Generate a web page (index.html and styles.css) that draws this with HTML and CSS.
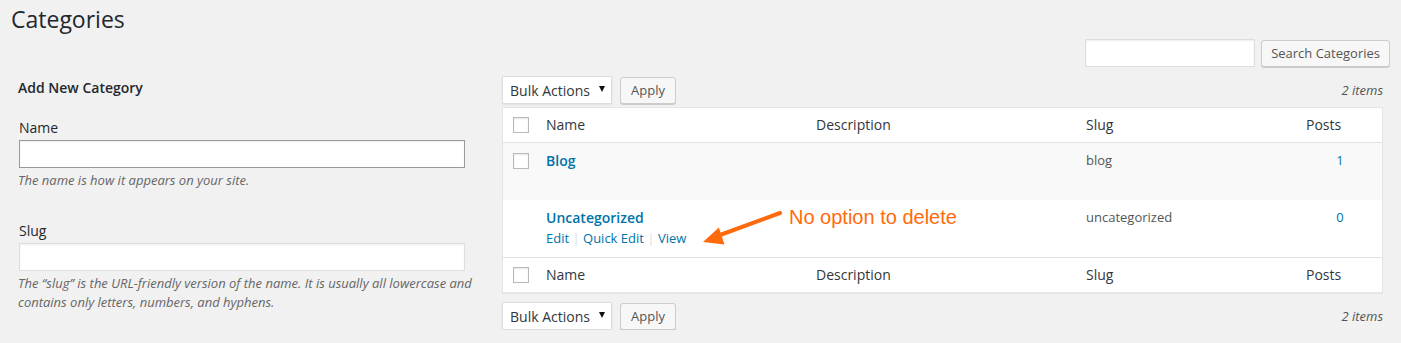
FILE: index.html
```html
<!DOCTYPE html>
<html lang="en">
<head>
  <meta charset="UTF-8">
  <title>Categories</title>
  <link rel="stylesheet" href="styles.css">
</head>
<body>

  <div class="wrap">
    <h1>Categories</h1>

    <form class="search-box">
      <input type="search" class="search-input">
      <button type="button" class="button">Search Categories</button>
    </form>

    <div class="columns">
      <div class="col-left">
        <h2>Add New Category</h2>

        <div class="form-field">
          <label for="tag-name">Name</label>
          <input type="text" id="tag-name" class="field-name">
          <p class="desc">The name is how it appears on your site.</p>
        </div>

        <div class="form-field slug-field">
          <label for="tag-slug">Slug</label>
          <input type="text" id="tag-slug">
          <p class="desc">The &ldquo;slug&rdquo; is the URL-friendly version of the name. It is usually all lowercase and contains only letters, numbers, and hyphens.</p>
        </div>
      </div>

      <div class="col-right">
        <div class="tablenav">
          <div class="bulk-select">
            <span>Bulk Actions</span>
            <span class="caret"></span>
          </div>
          <button type="button" class="button">Apply</button>
          <span class="count">2 items</span>
        </div>

        <table class="list-table">
          <thead>
            <tr>
              <th class="check-col"><span class="checkbox"></span></th>
              <th class="col-name">Name</th>
              <th class="col-desc">Description</th>
              <th class="col-slug">Slug</th>
              <th class="col-posts">Posts</th>
            </tr>
          </thead>
          <tbody>
            <tr class="alt">
              <td class="check-col"><span class="checkbox"></span></td>
              <td class="col-name">
                <a href="#" class="row-title">Blog</a>
                <div class="row-actions hidden">Edit</div>
              </td>
              <td class="col-desc"></td>
              <td class="col-slug">blog</td>
              <td class="col-posts"><a href="#">1</a></td>
            </tr>
            <tr>
              <td class="check-col"></td>
              <td class="col-name">
                <a href="#" class="row-title">Uncategorized</a>
                <div class="row-actions">
                  <a href="#">Edit</a> <span class="sep">|</span>
                  <a href="#">Quick Edit</a> <span class="sep">|</span>
                  <a href="#">View</a>
                </div>
              </td>
              <td class="col-desc"></td>
              <td class="col-slug">uncategorized</td>
              <td class="col-posts"><a href="#">0</a></td>
            </tr>
          </tbody>
          <tfoot>
            <tr>
              <th class="check-col"><span class="checkbox"></span></th>
              <th class="col-name">Name</th>
              <th class="col-desc">Description</th>
              <th class="col-slug">Slug</th>
              <th class="col-posts">Posts</th>
            </tr>
          </tfoot>
        </table>

        <div class="tablenav bottom">
          <div class="bulk-select">
            <span>Bulk Actions</span>
            <span class="caret"></span>
          </div>
          <button type="button" class="button">Apply</button>
          <span class="count">2 items</span>
        </div>

        <!-- annotation over the table -->
        <svg class="note-arrow" width="90" height="45" viewBox="0 0 90 45">
          <line x1="80" y1="8" x2="20" y2="30" stroke="#ff6a0c" stroke-width="4" stroke-linecap="round"/>
          <polygon points="3,37 18.9,22.5 24.5,39.5" fill="#ff6a0c"/>
        </svg>
        <span class="note-text">No option to delete</span>
      </div>
    </div>
  </div>

</body>
</html>
```

FILE: styles.css
```css
/* General */
body {
  margin: 0;
  background: #f1f1f1;
  color: #444;
  font-family: 'Open Sans', sans-serif;
  font-size: 13px;
}

.wrap {
  padding: 0 11px 0 11px;
}

h1 {
  margin: 0;
  padding-top: 5px;
  font-size: 23px;
  font-weight: 400;
  line-height: 29px;
  color: #23282d;
}

/* Buttons and inputs */
.button {
  height: 27px;
  padding: 0 10px 1px;
  font-family: 'Open Sans', sans-serif;
  font-size: 13px;
  line-height: 24px;
  color: #555;
  background: #f7f7f7;
  border: 1px solid #ccc;
  border-radius: 3px;
  box-shadow: 0 1px 0 #ccc;
  cursor: pointer;
}

input[type="text"],
input[type="search"] {
  box-sizing: border-box;
  height: 28px;
  margin: 0;
  padding: 3px 5px;
  font-family: 'Open Sans', sans-serif;
  font-size: 14px;
  background: #fff;
  border: 1px solid #ddd;
  box-shadow: inset 0 1px 2px rgba(0, 0, 0, 0.07);
  outline: none;
}

/* Search */
.search-box {
  display: flex;
  justify-content: flex-end;
  align-items: flex-start;
  gap: 6px;
  margin-top: 5px;
}

.search-input {
  width: 170px;
}

.search-box .button {
  height: 27px;
  margin-top: 1px;
  padding: 0 9px 1px;
}

/* Columns */
.columns {
  display: flex;
  gap: 37px;
  padding: 0 7px 0 8px;
}

.col-left {
  width: 446px;
  flex-shrink: 0;
}

.col-left h2 {
  margin: 11px 0 0 -1px;
  font-size: 14px;
  font-weight: 600;
  line-height: 20px;
  color: #23282d;
}

.form-field {
  margin-top: 20px;
}

.form-field label {
  display: block;
  margin-bottom: 2px;
  font-size: 14px;
  line-height: 20px;
  color: #23282d;
}

.form-field input {
  display: block;
  width: 100%;
}

.form-field .field-name {
  border-color: #999;
}

.desc {
  margin: 3px -14px 0 -1px;
  font-size: 13px;
  font-style: italic;
  line-height: 19px;
  color: #666;
}

.slug-field {
  margin-top: 31px;
}

/* Right column */
.col-right {
  position: relative;
  flex: 1;
  padding-top: 9px;
}

.tablenav {
  display: flex;
  align-items: center;
  gap: 8px;
  height: 28px;
  margin-bottom: 3px;
}

.tablenav.bottom {
  margin-top: 9px;
  margin-bottom: 0;
}

.bulk-select {
  box-sizing: border-box;
  display: flex;
  justify-content: space-between;
  align-items: center;
  width: 110px;
  height: 28px;
  padding: 0 6px 0 7px;
  font-size: 14px;
  color: #32373c;
  background: #fff;
  border: 1px solid #ddd;
  box-shadow: 0 1px 2px rgba(0, 0, 0, 0.07);
}

.caret {
  width: 0;
  height: 0;
  border-left: 3.5px solid transparent;
  border-right: 3.5px solid transparent;
  border-top: 6px solid #111;
  margin-top: -2px;
}

.tablenav .button {
  height: 27px;
}

.count {
  margin-left: auto;
  font-style: italic;
  color: #555;
}

/* Table */
.list-table {
  width: 100%;
  table-layout: fixed;
  border-collapse: collapse;
  border: 1px solid #e5e5e5;
  background: #fff;
  box-shadow: 0 1px 1px rgba(0, 0, 0, 0.04);
}

.list-table th,
.list-table td {
  padding: 7px 10px;
  text-align: left;
  vertical-align: top;
  font-weight: 400;
  line-height: 20px;
}

.list-table th {
  font-size: 14px;
  color: #32373c;
}

.list-table thead th {
  border-bottom: 1px solid #e1e1e1;
}

.list-table tfoot th {
  border-top: 1px solid #e1e1e1;
}

.list-table td {
  height: 40px;
  padding-top: 8px;
  padding-bottom: 9px;
  font-size: 13px;
  line-height: 19px;
  color: #555;
}

.list-table tr.alt td {
  background: #f9f9f9;
}

.check-col {
  width: 13px;
}

.col-name,
.col-desc {
  width: 250px;
}

.col-slug {
  width: 206px;
}

.list-table td.col-posts {
  text-align: center;
  padding-right: 14px;
}

.list-table th.col-posts {
  padding-left: 4px;
}

.checkbox {
  display: block;
  box-sizing: border-box;
  width: 16px;
  height: 16px;
  margin-top: 2px;
  border: 1px solid #b4b9be;
  background: #fff;
  box-shadow: inset 0 1px 2px rgba(0, 0, 0, 0.1);
}

a {
  color: #0073aa;
  text-decoration: none;
}

.row-title {
  display: block;
  font-size: 14px;
  font-weight: 600;
  line-height: 19px;
}

.row-actions {
  padding-top: 2px;
  font-size: 13px;
  line-height: 19px;
  color: #ddd;
}

.row-actions.hidden {
  visibility: hidden;
}

.sep {
  color: #ddd;
}

/* Annotation */
.note-arrow {
  position: absolute;
  left: 198px;
  top: 138px;
}

.note-text {
  position: absolute;
  left: 287px;
  top: 138px;
  font-family: 'Liberation Sans', Arial, sans-serif;
  font-size: 20px;
  line-height: 24px;
  color: #ff6a0c;
}
```
